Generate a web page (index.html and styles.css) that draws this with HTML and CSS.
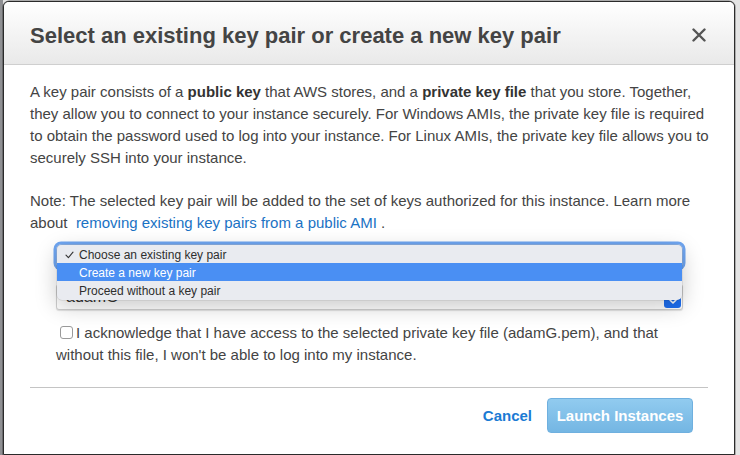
FILE: index.html
```html
<!DOCTYPE html>
<html>
<head>
<meta charset="utf-8">
<link rel="stylesheet" href="styles.css">
</head>
<body>
<div class="modal">
  <div class="header">
    <h1 class="title">Select an existing key pair or create a new key pair</h1>
    <span class="close"><svg width="14" height="14" viewBox="0 0 14 14"><path d="M1.5 1.5 L12.5 12.5 M12.5 1.5 L1.5 12.5" stroke="#555" stroke-width="2.4" stroke-linecap="round" fill="none"/></svg></span>
  </div>
  <div class="content">
    <p class="text">A key pair consists of a <b>public key</b> that AWS stores, and a <b>private key file</b> that you store. Together,<br>they allow you to connect to your instance securely. For Windows AMIs, the private key file is required<br>to obtain the password used to log into your instance. For Linux AMIs, the private key file allows you to<br>securely SSH into your instance.</p>
    <p class="text note">Note: The selected key pair will be added to the set of keys authorized for this instance. Learn more<br>about &nbsp;<a class="link">removing existing key pairs from a public AMI</a> .</p>
    <div class="selects">
      <div class="select select-focus"></div>
      <div class="select select-name"><span class="value">adamG</span><span class="arrow"><svg width="10" height="7" viewBox="0 0 10 7"><path d="M1.5 1.5 L5 5 L8.5 1.5" stroke="#fff" stroke-width="1.6" fill="none" stroke-linecap="round" stroke-linejoin="round"/></svg></span></div>
      <div class="menu">
        <div class="opt"><svg class="check" width="9" height="8" viewBox="0 0 9 8"><path d="M1 4.2 L3.4 6.6 L8 1.2" stroke="#333" stroke-width="1.1" fill="none" stroke-linecap="round" stroke-linejoin="round"/></svg>Choose an existing key pair</div>
        <div class="opt active">Create a new key pair</div>
        <div class="opt">Proceed without a key pair</div>
      </div>
    </div>
    <p class="ack"><span class="checkbox"></span>I acknowledge that I have access to the selected private key file (adamG.pem), and that<br>without this file, I won't be able to log into my instance.</p>
    <div class="rule"></div>
    <div class="footer">
      <a class="cancel">Cancel</a>
      <button class="launch">Launch Instances</button>
    </div>
  </div>
</div>
</body>
</html>
```

FILE: styles.css
```css
html, body {
  margin: 0;
  padding: 0;
}
body {
  width: 740px;
  height: 455px;
  overflow: hidden;
  background: linear-gradient(to right, #8f9093 0, #8f9093 3px, #e4e4e4 3px, #e4e4e4 100%);
  font-family: "Liberation Sans", Arial, sans-serif;
}
.modal {
  box-sizing: border-box;
  margin: 1px 0 0 3px;
  width: 732px;
  height: 454px;
  background: #fff;
  border: 1px solid #2b2b2b;
  border-radius: 6px 6px 0 0;
  box-shadow: 0 0 0 0.5px rgba(0,0,0,0.5);
  display: flex;
  flex-direction: column;
}
.header {
  box-sizing: border-box;
  height: 63px;
  padding: 22px 28px 0 26px;
  background: linear-gradient(to bottom, #ffffff 0%, #f4f4f4 50%, #e9e9e9 100%);
  border-bottom: 1px solid #cfcfcf;
  border-radius: 5px 5px 0 0;
  display: flex;
  justify-content: space-between;
  align-items: flex-start;
}
.title {
  margin: 0;
  font-size: 22px;
  line-height: 24px;
  font-weight: bold;
  color: #444;
}
.close {
  display: block;
  width: 14px;
  height: 14px;
  margin-top: 4px;
}
.close svg { display: block; }
.content {
  padding: 0 26px;
}
.text {
  margin: 16px 0 0;
  font-size: 15px;
  line-height: 22px;
  color: #444;
  white-space: nowrap;
}
.text b {
  color: #333;
}
.note {
  margin-top: 21px;
}
.link {
  color: #1a72c4;
  text-decoration: none;
}
.selects {
  position: relative;
  margin: 10px 25px 0 26px;
}
.select {
  box-sizing: border-box;
  background: #fff;
  color: #333;
}
.select-focus {
  height: 24px;
  border: 1px solid #8fb7ef;
  border-radius: 5px;
  box-shadow: 0 0 0 2.5px #6fa6f2;
}
.select-name {
  margin-top: 16px;
  height: 26px;
  border: 1px solid #cfcfcf;
  border-radius: 3px;
  box-shadow: 0 1px 1px rgba(0,0,0,0.12);
  display: flex;
  justify-content: space-between;
  align-items: center;
  padding: 0 1px 0 9px;
  font-size: 16px;
}
.value { color: #333; }
.arrow {
  width: 17px;
  height: 22px;
  background: #1e6ff1;
  border-radius: 3px;
  display: flex;
  align-items: flex-end;
  justify-content: center;
  padding-bottom: 3px;
  box-sizing: border-box;
}
.arrow svg { display: block; }
.menu {
  position: absolute;
  top: 1px;
  left: 1px;
  right: 1px;
  height: 55px;
  background: #e9ebf0;
  border-radius: 5px;
  box-shadow: 0 6px 22px rgba(0,0,0,0.22), 0 0 0 0.5px rgba(0,0,0,0.12);
  display: flex;
  flex-direction: column;
  overflow: hidden;
}
.opt {
  position: relative;
  box-sizing: border-box;
  height: 18px;
  line-height: 18px;
  padding: 1px 0 0 22px;
  font-size: 12px;
  color: #2e2e2e;
}
.opt.active {
  background: #4a8ff3;
  color: #fff;
}
.check {
  position: absolute;
  left: 8px;
  top: 6px;
  display: block;
}
.ack {
  margin: 12px 0 0 26px;
  font-size: 15px;
  line-height: 22px;
  color: #444;
  white-space: nowrap;
}
.checkbox {
  display: inline-block;
  box-sizing: border-box;
  width: 13px;
  height: 13px;
  margin: 0 3px 0 4px;
  border: 1px solid #9a9a9a;
  border-radius: 3px;
  background: #fff;
  vertical-align: -1px;
}
.rule {
  margin-top: 21px;
  height: 1px;
  background: #c4c4c4;
}
.footer {
  margin-top: 10px;
  padding-right: 15px;
  display: flex;
  justify-content: flex-end;
  align-items: center;
  gap: 15px;
}
.cancel {
  font-size: 15px;
  font-weight: bold;
  color: #1b7bd4;
}
.launch {
  box-sizing: border-box;
  width: 146px;
  height: 35px;
  padding: 0;
  border: 1px solid #6fb0df;
  border-radius: 4px;
  background: linear-gradient(to bottom, #91cbef 0%, #74b6e3 100%);
  color: #fff;
  font-family: "Liberation Sans", Arial, sans-serif;
  font-size: 15px;
  font-weight: bold;
}
```
